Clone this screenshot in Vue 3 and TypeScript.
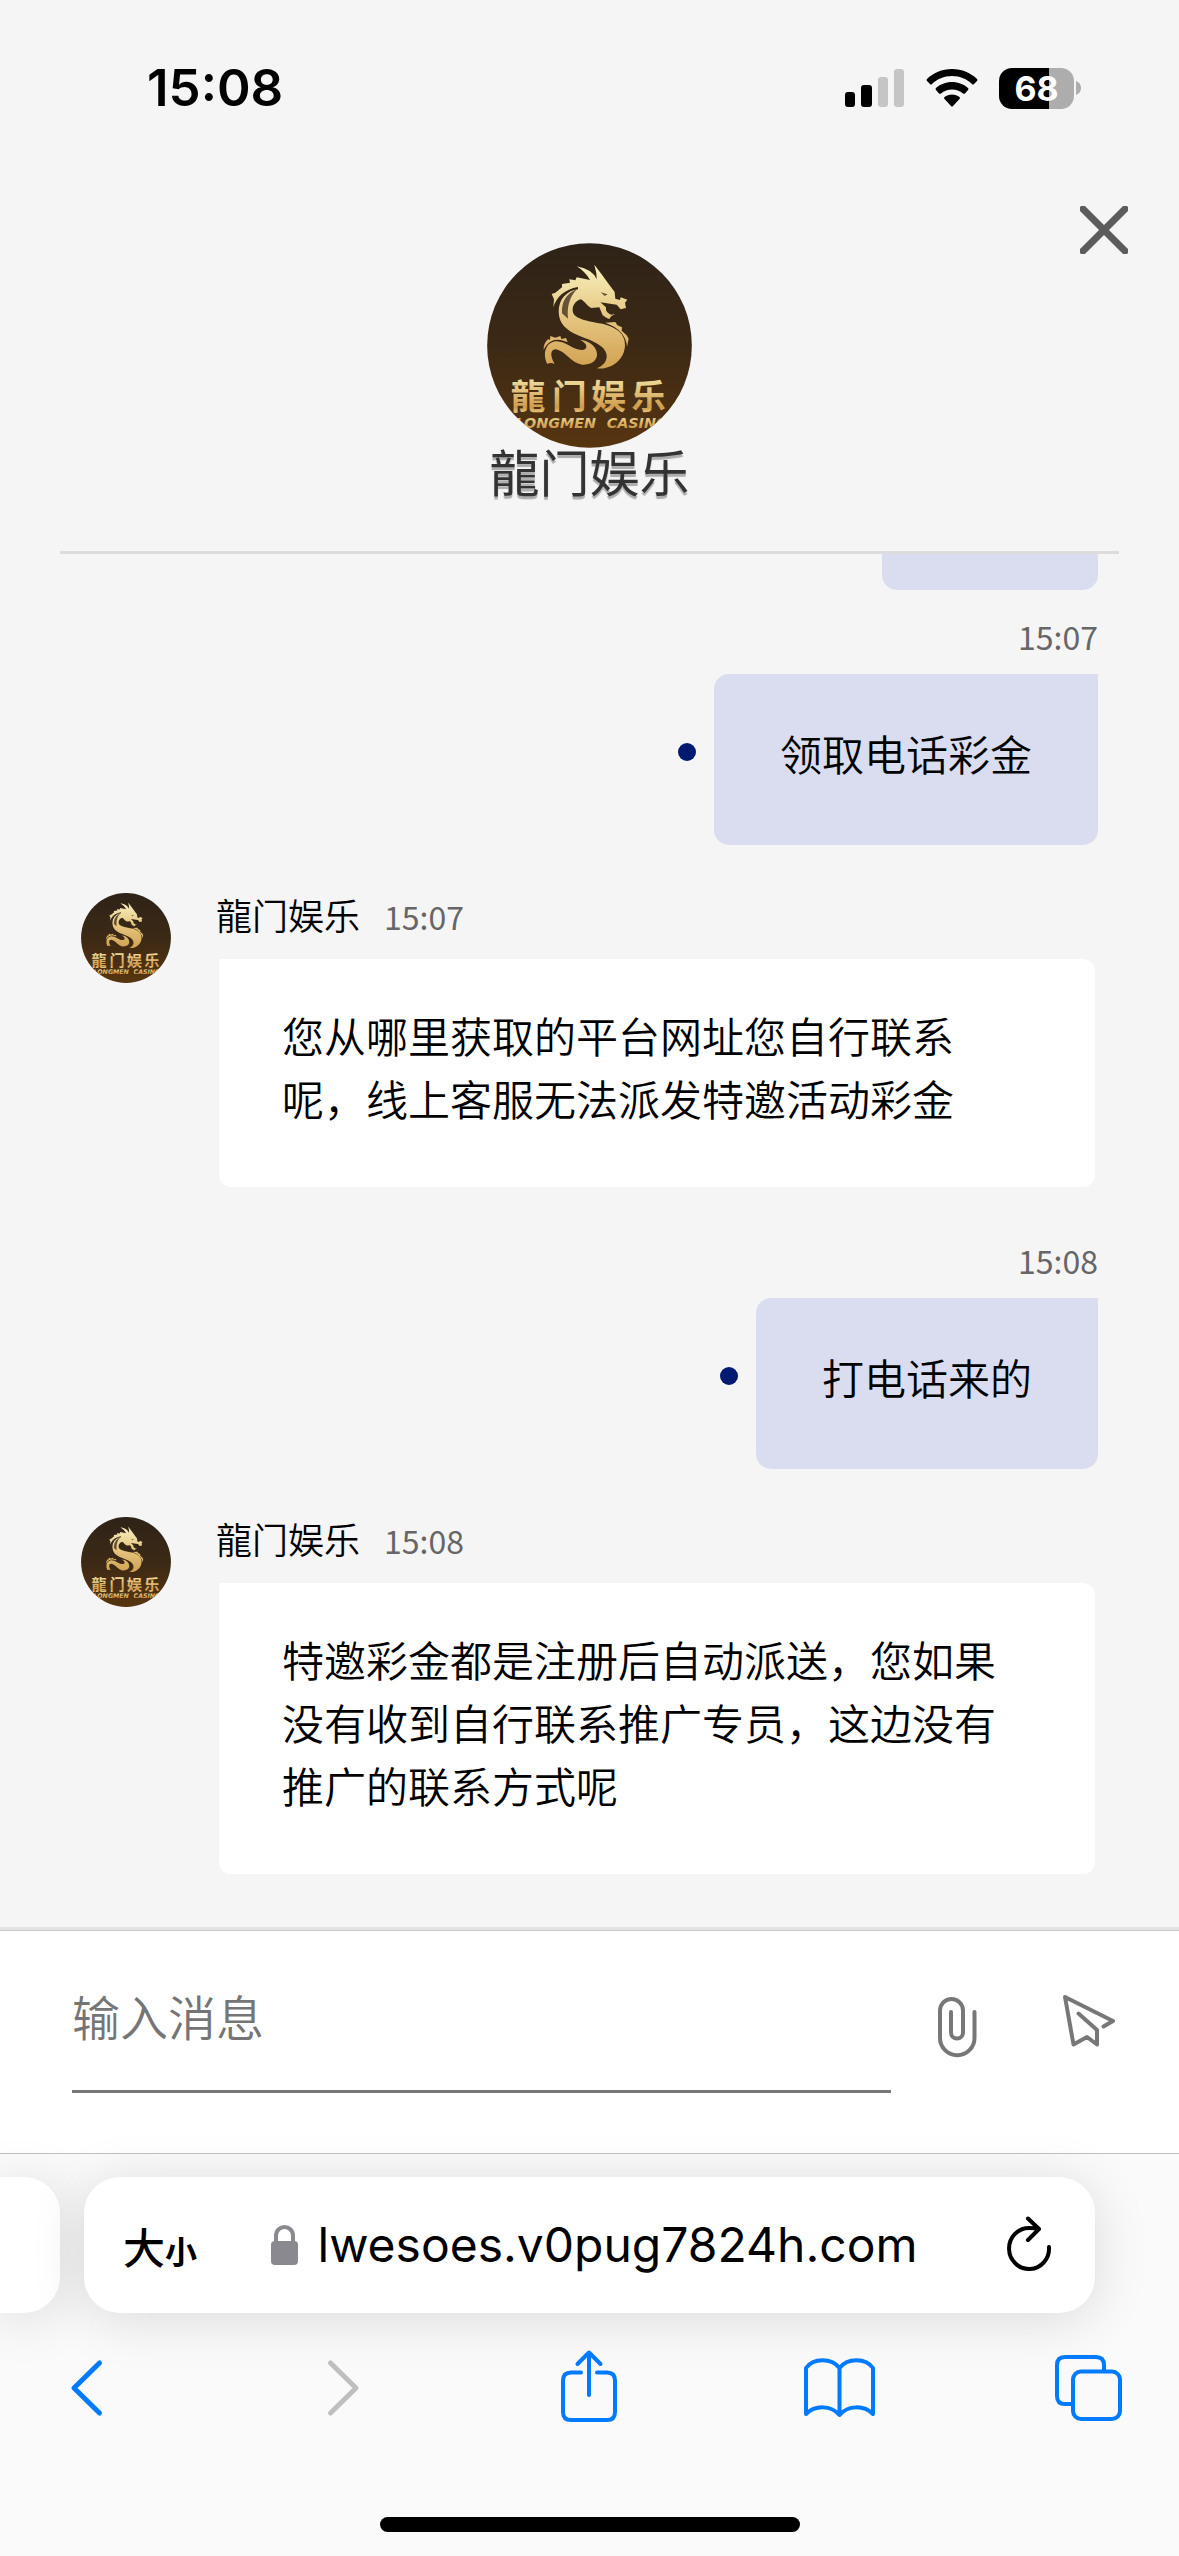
<script setup lang="ts">
import { ref } from 'vue'

interface Message {
  id: number
  from: 'me' | 'agent'
  time: string
  text: string
}

const agentName = '龍门娱乐'
const draft = ref('')

const messages: Message[] = [
  { id: 1, from: 'me', time: '15:07', text: '领取电话彩金' },
  { id: 2, from: 'agent', time: '15:07', text: '您从哪里获取的平台网址您自行联系呢，线上客服无法派发特邀活动彩金' },
  { id: 3, from: 'me', time: '15:08', text: '打电话来的' },
  { id: 4, from: 'agent', time: '15:08', text: '特邀彩金都是注册后自动派送，您如果没有收到自行联系推广专员，这边没有推广的联系方式呢' },
]
</script>

<template>
  <div class="page">
    <div class="status">
      <span class="clock">15:08</span>
      <div class="indicators">
        <svg class="signal" viewBox="0 0 60 38" aria-hidden="true">
          <rect x="0" y="23" width="10" height="15" rx="3" />
          <rect x="16" y="16" width="11" height="22" rx="3" />
          <rect x="33" y="8" width="10" height="30" rx="3" fill="#c5c5c5" />
          <rect x="49" y="0" width="10" height="38" rx="3" fill="#c5c5c5" />
        </svg>
        <svg class="wifi" viewBox="0 0 52 38" aria-hidden="true">
          <path d="M26 0C36 0 45 4 51 10Q52 11 51 12L48 15Q47 16 46 15C41 10 34 7 26 7S11 10 6 15Q5 16 4 15L1 12Q0 11 1 10C7 4 16 0 26 0Z" />
          <path d="M26 13C32.500 13 38 15.500 42 19Q43 20 42 21L39 24.500Q38 25 37 24.500C34 22 30 20.500 26 20.500S18 22 15 24.500Q14 25 13 24.500L10 21Q9 20 10 19C14 15.500 19.500 13 26 13Z" />
          <path d="M26 25.500C29 25.500 31.500 26.500 33.500 28Q34.500 29 33.500 30L27 37Q26 38 25 37L18.500 30Q17.500 29 18.500 28C20.500 26.500 23 25.500 26 25.500Z" />
        </svg>
        <div class="battery">
          <span class="cell">68</span>
          <svg class="nub" viewBox="0 0 5 14" aria-hidden="true"><path d="M0 0Q5 2 5 7T0 14Z" fill="#adadad" /></svg>
        </div>
      </div>
    </div>

    <header class="header">
      <div class="brand">
        <svg class="logo" viewBox="81 69 615 615" role="img" aria-label="Longmen Casino">
          <defs>
            <linearGradient id="disc" x1="0" y1="0" x2="0" y2="1">
              <stop offset="0" stop-color="#2e2318" />
              <stop offset="0.5" stop-color="#3c2915" />
              <stop offset="1" stop-color="#573510" />
            </linearGradient>
            <linearGradient id="gold" gradientUnits="userSpaceOnUse" x1="0" y1="140" x2="0" y2="445">
              <stop offset="0" stop-color="#f8efbc" />
              <stop offset="0.4" stop-color="#e8cd8b" />
              <stop offset="1" stop-color="#d2a151" />
            </linearGradient>
            <linearGradient id="goldText" gradientUnits="userSpaceOnUse" x1="0" y1="470" x2="0" y2="625">
              <stop offset="0" stop-color="#f2e2a4" />
              <stop offset="0.6" stop-color="#cf9c4c" />
              <stop offset="0.75" stop-color="#f0dc9c" />
              <stop offset="1" stop-color="#cb9645" />
            </linearGradient>
            <clipPath id="round"><circle cx="388.500" cy="376.500" r="307" /></clipPath>
            <g id="emblem" clip-path="url(#round)">
              <rect x="81" y="69" width="615" height="615" fill="url(#disc)" />
              <g fill="url(#gold)">
                <path d="M354 208C320 212 296 238 296 274C296 314 322 332 354 346C392 362 436 374 440 406C441 426 428 438 411 445C452 450 495 420 495 374C495 342 470 322 430 312C396 304 340 300 338 272C337 256 346 244 362 238C375 244 380 258 394 264L418 262L428 286Q438 294 448 297L454 288L466 282L453 284Q436 278 438 262L421 247L470 254L482 268L498 264L495 248L502 239L482 232L480 240L466 236L464 216L440 184L426 164L403 134L409 160L410 178Q398 148 350 139Q374 153 390 180L350 172L346 181L328 178L330 188L306 192L306 202L286 218L275 222L282 238L280 262C290 230 314 208 354 201Z" />
                <path d="M436 308L466 306L472 316L486 322L485 332L500 346L506 356L501 380C499 350 480 324 436 308Z" />
                <path d="M262 432C248 405 254 370 286 364C318 362 338 392 368 390C386 386 382 370 360 359C394 362 413 386 411 406C408 428 388 435 366 434C334 430 318 394 288 388C270 388 270 408 284 432Q272 426 262 432Z" />
                <path d="M251 390Q250 370 264 358L270 359L271 348L286 353L301 348L304 357L318 354L323 367C292 352 266 358 251 390Z" />
              </g>
              <path d="M306 280Q302 228 352 206Q318 240 324 296M422 217L443 223L434 228Z" fill="#3a2816" opacity="0.75" />
              <g fill="url(#goldText)">
                <text class="seal" x="152 276 394 514" y="566">龍门娱乐</text>
                <text class="latin" x="408" y="624" text-anchor="end">LONGMEN</text>
                <text class="latin" x="440" y="624">CASINO</text>
              </g>
            </g>
          </defs>
          <use href="#emblem" />
        </svg>
        <h1 class="title">{{ agentName }}</h1>
      </div>
      <button class="close" type="button" aria-label="关闭">
        <svg viewBox="0 0 48 48"><path d="M3 3L45 45M45 3L3 45" /></svg>
      </button>
    </header>

    <main class="chat">
      <div class="bubble-tail"></div>
      <article v-for="m in messages" :key="m.id" :class="['message', m.from]">
        <template v-if="m.from === 'me'">
          <time class="time">{{ m.time }}</time>
          <div class="sent">
            <i class="dot"></i>
            <p class="bubble">{{ m.text }}</p>
          </div>
        </template>
        <template v-else>
          <svg class="avatar" viewBox="81 69 615 615" aria-hidden="true"><use href="#emblem" /></svg>
          <div class="received">
            <div class="meta">
              <span class="name">{{ agentName }}</span>
              <time class="time">{{ m.time }}</time>
            </div>
            <p class="bubble">{{ m.text }}</p>
          </div>
        </template>
      </article>
    </main>

    <form class="composer" @submit.prevent>
      <input v-model="draft" class="field" type="text" placeholder="输入消息" aria-label="输入消息" />
      <button class="tool" type="button" aria-label="附件">
        <svg viewBox="927 1991 60 78">
          <path d="M974.500 2012V2038A17.250 17.250 0 0 1 940 2038V2010.500A11.500 11.500 0 0 1 963 2010.500V2032.500A6 6 0 0 1 951 2032.500V2012" />
        </svg>
      </button>
      <button class="tool send" type="submit" aria-label="发送">
        <svg viewBox="1059 1991 60 78">
          <path d="M1103.500 2026.500L1113 2021L1065 1997L1073.500 2044.500L1087 2037L1097 2044.500V2030L1078.500 2013.500" />
        </svg>
      </button>
    </form>

    <footer class="browser">
      <div class="tabs">
        <div class="neighbour"></div>
        <div class="address">
          <button class="text-size" type="button" aria-label="文字大小"><span class="big">大</span><span class="small">小</span></button>
          <a class="url" href="#">
            <svg class="lock" viewBox="0 0 27 40" aria-hidden="true">
              <path d="M5 18V11C5 -1 22 -1 22 11V18" fill="none" stroke="#8a898f" stroke-width="4" />
              <rect y="16" width="27" height="24" rx="4" fill="#8a898f" />
            </svg>
            <span>lwesoes.v0pug7824h.com</span>
          </a>
          <button class="reload" type="button" aria-label="重新加载">
            <svg viewBox="1005 2216 48 58">
              <path d="M1049 2247A20 20.500 0 1 1 1029 2228Q1034 2228 1039 2229M1028 2218.500L1039 2229L1028 2240" />
            </svg>
          </button>
        </div>
      </div>
      <nav class="toolbar">
        <button class="chevron" type="button" aria-label="后退"><svg viewBox="51 2348 72 76"><path d="M99.500 2363L74 2388L99.500 2413" /></svg></button>
        <button class="chevron" type="button" aria-label="前进" disabled><svg viewBox="302 2348 72 76"><path d="M330.500 2363L356 2388L330.500 2413" /></svg></button>
        <button type="button" aria-label="分享"><svg viewBox="552 2348 72 76"><path d="M581 2372.500H571Q563 2372.500 563 2380.500V2412Q563 2420 571 2420H607Q615 2420 615 2412V2380.500Q615 2372.500 607 2372.500H597M589 2395V2353M577.500 2364L589 2352.500L600.500 2364" /></svg></button>
        <button type="button" aria-label="书签"><svg viewBox="803 2348 72 76"><path d="M839.500 2368C832 2357.500 813 2357.500 806 2368V2414C815 2405 831 2405 839.500 2415C848 2405 864 2405 873 2414V2368C866 2357.500 847 2357.500 839.500 2368ZV2414" /></svg></button>
        <button type="button" aria-label="标签页"><svg viewBox="1053 2348 72 76"><path d="M1071 2404H1065Q1057 2404 1057 2396V2365Q1057 2357 1065 2357H1096Q1104 2357 1104 2365V2370" /><rect x="1073" y="2371.500" width="47" height="47.500" rx="8" /></svg></button>
      </nav>
      <div class="home"></div>
    </footer>
  </div>
</template>

<style>
body {
  margin: 0;
  background: #f5f5f5;
}
</style>

<style scoped>
.page {
  display: flex;
  flex-direction: column;
  min-height: 100vh;
  background: #f5f5f5;
  color: #000;
  font-family: "Noto Sans CJK SC", "Noto Sans", sans-serif;
  font-weight: 350;
}

button {
  display: block;
  margin: 0;
  padding: 0;
  border: 0;
  background: none;
  color: inherit;
  font: inherit;
}

svg {
  display: block;
}

.status {
  display: flex;
  align-items: center;
  justify-content: space-between;
  height: 176px;
  padding: 0 98px 0 147px;
}

.clock {
  font: 600 51px/60px Inter, sans-serif;
}

.indicators {
  display: flex;
  align-items: center;
  gap: 21px;
}

.signal {
  width: 60px;
  height: 38px;
}

.wifi {
  width: 52px;
  height: 38px;
}

.battery {
  display: flex;
  align-items: center;
  gap: 2px;
}

.cell {
  width: 75px;
  border-radius: 13px;
  background: linear-gradient(90deg, #000 67%, #adadad 67%);
  color: #fff;
  font: 700 34px/41px Inter, sans-serif;
  text-align: center;
}

.nub {
  width: 5px;
  height: 14px;
}

.header {
  display: grid;
  grid-template-columns: 1fr auto 1fr;
  align-items: start;
  margin: 0 60px;
  padding-bottom: 58px;
  border-bottom: 3px solid #dcdcdc;
}

.brand {
  grid-column: 2;
  padding-top: 67px;
}

.logo {
  width: 205px;
  height: 205px;
  margin: 0 auto;
}

.seal {
  font: 700 104px "Noto Sans CJK SC", sans-serif;
}

.latin {
  font: italic 700 43px "DejaVu Sans", sans-serif;
}

.title {
  margin: 0;
  color: #333;
  font-size: 50px;
  font-weight: 400;
  line-height: 45px;
  text-align: center;
  text-shadow: 0 3px 1px rgba(0, 0, 0, 0.3);
}

.close {
  justify-self: end;
  margin: 30px -9px 0 0;
}

.close svg {
  width: 48px;
  height: 48px;
  fill: none;
  stroke: #5c5c5c;
  stroke-width: 7;
  stroke-linecap: round;
}

.chat {
  flex: 1;
  padding: 0 81px 53px;
}

.bubble-tail {
  width: 216px;
  height: 36px;
  margin: 0 0 21px auto;
  border-radius: 0 0 15px 15px;
  background: #d9ddef;
}

.message + .message {
  margin-top: 48px;
}

.time {
  color: #666;
  font-size: 32px;
  font-weight: 400;
  line-height: 51px;
}

.me {
  display: flex;
  flex-direction: column;
  align-items: flex-end;
  gap: 12px;
}

.sent {
  display: flex;
  align-items: center;
  gap: 18px;
}

.dot {
  width: 18px;
  height: 18px;
  margin-bottom: 15px;
  border-radius: 50%;
  background: #001a72;
}

.bubble {
  margin: 0;
  font-size: 42px;
  line-height: 63px;
}

.me .bubble {
  padding: 47px 66px 61px;
  border-radius: 15px 0 15px 15px;
  background: #d9ddef;
}

.agent {
  display: flex;
  gap: 45px;
}

.avatar {
  flex: none;
  width: 90px;
  height: 90px;
}

.received {
  flex: 1;
  min-width: 0;
}

.meta {
  display: flex;
  align-items: baseline;
  gap: 24px;
  height: 42px;
  margin-bottom: 24px;
  line-height: 42px;
}

.meta .time {
  line-height: 42px;
}

.name {
  font-size: 36px;
}

.agent .bubble {
  margin: 0 3px;
  padding: 44px 63px 58px;
  border-radius: 0 12px 12px 12px;
  background: #fff;
}

.composer {
  display: flex;
  align-items: center;
  padding: 36px 60px 60px 72px;
  border-top: 3px solid #e3e3e3;
  background: #fff;
  box-shadow: inset 0 1px #c8c8c8;
}

.field {
  flex: 1;
  box-sizing: border-box;
  min-width: 0;
  height: 127px;
  margin-right: 36px;
  padding: 0 0 26px;
  border: 0;
  border-bottom: 3px solid #777;
  border-radius: 0;
  outline: 0;
  background: none;
  color: #000;
  font: 350 48px "Noto Sans CJK SC", sans-serif;
}

.field::placeholder {
  color: #757575;
  opacity: 1;
}

.tool svg {
  width: 60px;
  height: 78px;
  fill: none;
  stroke: #777;
  stroke-width: 4;
  stroke-linecap: round;
  stroke-linejoin: round;
}

.send {
  margin-left: 72px;
}

.browser {
  padding-bottom: 24px;
  border-top: 1px solid #c0c0c0;
  background: #fafafa;
}

.tabs {
  display: flex;
  gap: 24px;
  padding: 23px 84px 0 0;
}

.neighbour {
  width: 60px;
  border-radius: 0 36px 36px 0;
  background: #fff;
  box-shadow: 0 6px 54px rgba(0, 0, 0, 0.13);
}

.address {
  flex: 1;
  display: flex;
  align-items: center;
  justify-content: space-between;
  height: 136px;
  padding: 0 42px 0 39px;
  border-radius: 36px;
  background: #fff;
  box-shadow: 0 6px 54px rgba(0, 0, 0, 0.13);
}

.text-size {
  display: flex;
  align-items: baseline;
  font-weight: 500;
}

.big {
  font-size: 42px;
}

.small {
  font-size: 32px;
  font-weight: 700;
}

.url {
  display: flex;
  align-items: center;
  gap: 20px;
  margin-right: 14px;
  color: #000;
  font: 48px/60px Inter, sans-serif;
  text-decoration: none;
}

.lock {
  width: 27px;
  height: 40px;
}

.reload svg {
  width: 48px;
  height: 58px;
  fill: none;
  stroke: #000;
  stroke-width: 4;
  stroke-linecap: round;
  stroke-linejoin: round;
}

.toolbar {
  display: flex;
  justify-content: space-between;
  padding: 35px 54px 93px 51px;
}

.toolbar svg {
  width: 72px;
  height: 76px;
  fill: none;
  stroke: #007aff;
  stroke-width: 4;
  stroke-linecap: round;
  stroke-linejoin: round;
}

.toolbar .chevron svg {
  stroke-width: 5;
}

.toolbar button:disabled svg {
  stroke: #bfbfbf;
}

.home {
  width: 420px;
  height: 15px;
  margin: 0 auto;
  border-radius: 8px;
  background: #000;
}
</style>
